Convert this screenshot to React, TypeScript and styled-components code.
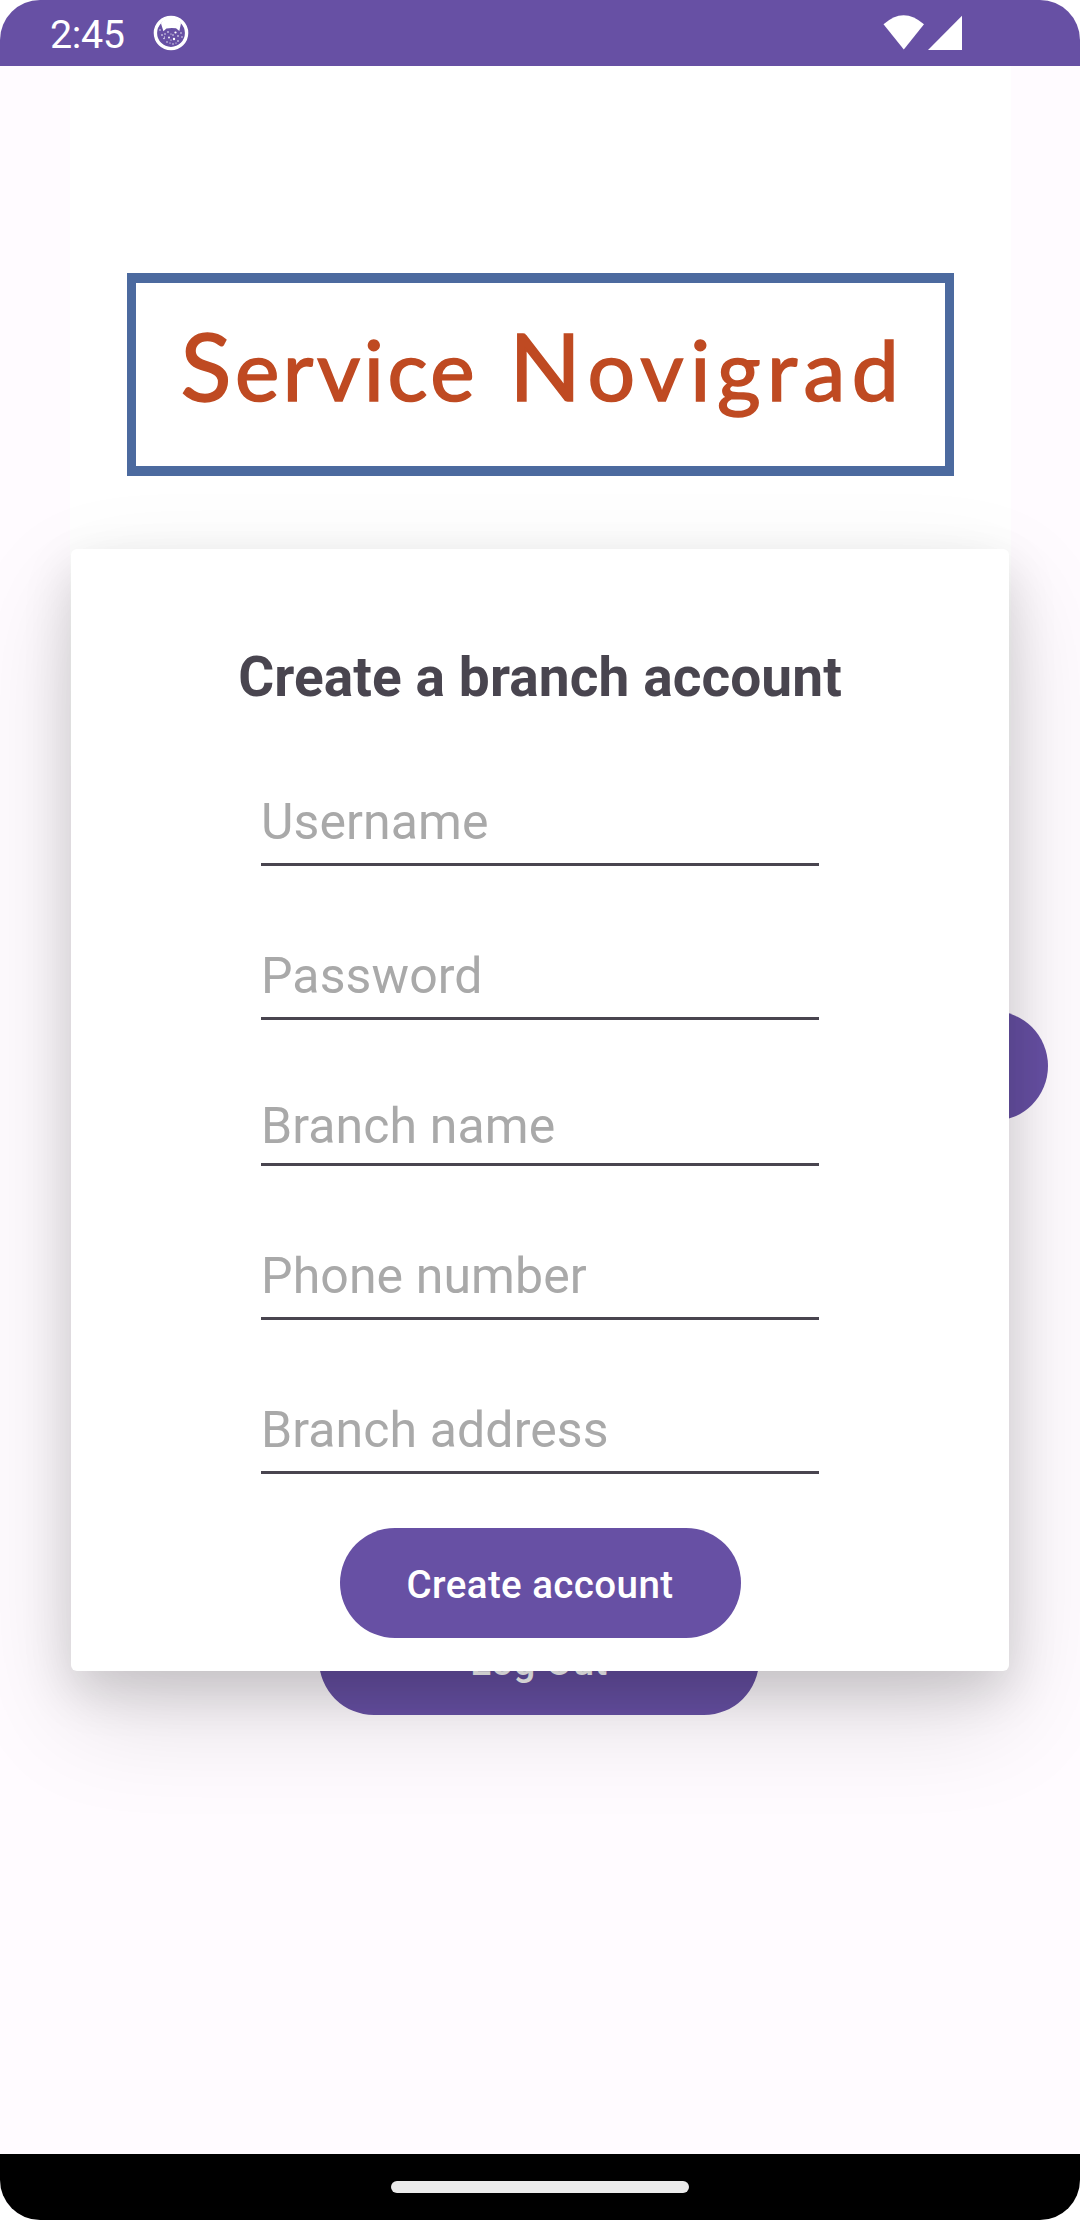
import React from "react";
import styled, { createGlobalStyle } from "styled-components";

const GlobalStyle = createGlobalStyle`
  *, *::before, *::after { box-sizing: border-box; }
  body { margin: 0; background: #ffffff; font-family: Roboto, "Liberation Sans", sans-serif; }
  button, input { font-family: inherit; }
`;

const PURPLE = "#6750a4";

const Screen = styled.div`
  position: relative;
  display: flex;
  flex-direction: column;
  width: 1080px;
  height: 2220px;
  overflow: hidden;
  border-radius: 40px;
  background: #fffbff;
`;

const StatusBar = styled.header`
  display: flex;
  align-items: center;
  height: 66px;
  flex: none;
  padding: 0 117px 0 50px;
  background: ${PURPLE};
  color: #ffffff;
`;

const Clock = styled.span`
  width: 78px;
  padding-top: 3px;
  font-size: 39.5px;
  line-height: 66px;
  letter-spacing: -0.4px;
  white-space: nowrap;
`;

const CatIcon = styled.svg`
  width: 36px;
  height: 36px;
  margin-left: 25px;
`;

const StatusIcons = styled.svg`
  width: 80px;
  height: 36px;
  margin-left: auto;
`;

const Page = styled.main`
  flex: 1;
  display: flex;
  flex-direction: column;
  align-items: center;
`;

const Banner = styled.div`
  width: 941px;
  height: 700px;
  flex: none;
  padding: 207px 57px 0;
  background: #ffffff;
`;

const Logo = styled.div`
  display: flex;
  align-items: baseline;
  gap: 31px;
  width: 827px;
  height: 203px;
  padding: 34px 0 0 45px;
  border: solid #4c6a9f;
  border-width: 10px 9px;
  color: #bf4a22;
  font-family: Lato, sans-serif;
  line-height: 96px;
`;

const LogoWord = styled.span<{ $spacing: number }>`
  display: inline-block;
  font-size: 84px;
  letter-spacing: ${(p) => p.$spacing}px;
  -webkit-text-stroke: 1.6px #bf4a22;
  &::first-letter { font-size: 94px; }
`;

const PillButton = styled.button<{ $width: number }>`
  display: flex;
  align-items: center;
  justify-content: center;
  width: ${(p) => p.$width}px;
  height: 110px;
  flex: none;
  padding: 2px 0 0;
  border: 0;
  border-radius: 55px;
  background: ${PURPLE};
  color: #ffffff;
  font-size: 38.5px;
  font-weight: 500;
  letter-spacing: 0.42px;
`;

const ActionRow = styled.div`
  display: flex;
  justify-content: flex-end;
  width: 100%;
  margin-top: 245px;
  padding-right: 32px;
`;

const LogoutRow = styled.div`
  display: flex;
  justify-content: center;
  width: 100%;
  margin-top: 484px;
  padding-right: 2px;
`;

const NavBar = styled.footer`
  display: flex;
  align-items: center;
  justify-content: center;
  height: 66px;
  flex: none;
  background: #000000;
`;

const NavHandle = styled.div`
  width: 298px;
  height: 12px;
  border-radius: 6px;
  background: #ebebeb;
`;

const Dialog = styled.section`
  position: absolute;
  top: 549px;
  left: 71px;
  display: flex;
  flex-direction: column;
  align-items: center;
  width: 938px;
  height: 1122px;
  border-radius: 6px;
  background: #ffffff;
  box-shadow: 0 20px 50px rgba(0, 0, 0, 0.14), 0 44px 110px rgba(0, 0, 0, 0.13);
`;

const Title = styled.h1`
  margin: 95px 0 0;
  color: #49454f;
  font-size: 55px;
  font-weight: 700;
  line-height: 66px;
  letter-spacing: 0.1px;
  white-space: nowrap;
`;

const Fields = styled.form`
  display: flex;
  flex-direction: column;
  gap: 66px;
  width: 558px;
  margin-top: 68px;
`;

const Field = styled.input<{ $height: number }>`
  width: 100%;
  height: ${(p) => p.$height}px;
  padding: 0;
  border: 0;
  outline: 0;
  border-radius: 0;
  background: linear-gradient(#49454f, #49454f) left bottom / 100% 3px no-repeat;
  color: #49454f;
  font-size: 50px;
  letter-spacing: 0.1px;
  &::placeholder { color: #a9a9a9; opacity: 1; }
`;

const fields = [
  { label: "Username", type: "text", height: 88 },
  { label: "Password", type: "password", height: 88 },
  { label: "Branch name", type: "text", height: 80 },
  { label: "Phone number", type: "tel", height: 88 },
  { label: "Branch address", type: "text", height: 88 },
];

const Submit = styled.div`
  display: flex;
  margin-top: 54px;
`;

const freckles: [number, number, number][] = [
  [7, 15, 0.7], [9, 20, 0.8], [12, 19, 0.7], [11, 23.5, 0.7], [15, 17, 0.8],
  [11.5, 22, 0.6], [16, 22.5, 0.9], [14, 27, 0.7], [18, 25, 0.6], [20, 29, 0.7],
  [22.5, 17.5, 1.1], [20, 20, 0.7], [21, 24, 1.2], [25, 21, 0.8], [25, 26, 0.8],
  [28, 18, 0.7], [29, 22, 0.7], [18, 19, 0.6], [17, 28, 0.6], [23, 28, 0.6],
];

export default function App() {
  return (
    <>
      <GlobalStyle />
      <Screen>
        <StatusBar>
          <Clock>2:45</Clock>
          <CatIcon viewBox="0 0 36 36" fill="#ffffff">
            <circle cx="18" cy="18" r="15.6" fill="none" stroke="#ffffff" strokeWidth="3.4" />
            <path d="M8 8.5 C12 1 24 1 28 8.5 L26.3 16 L23 13.2 Q18 12.6 13.4 13.4 L10.4 16.2 Z" />
            {freckles.map(([x, y, r]) => (
              <circle key={`${x}-${y}`} cx={x} cy={y} r={r} />
            ))}
          </CatIcon>
          <StatusIcons viewBox="0 0 80 36" fill="#ffffff">
            <path d="M0.5 9.3 Q20.5 -9 41 9.3 L20.8 34.5 Z" />
            <path d="M45 35 L79 0.8 V35 Z" />
          </StatusIcons>
        </StatusBar>
        <Page>
          <Banner>
            <Logo>
              <LogoWord $spacing={3.5}>Service</LogoWord>
              <LogoWord $spacing={6.5}>Novigrad</LogoWord>
            </Logo>
          </Banner>
          <ActionRow>
            <PillButton $width={440} />
          </ActionRow>
          <LogoutRow>
            <PillButton $width={440}>Log Out</PillButton>
          </LogoutRow>
        </Page>
        <NavBar>
          <NavHandle />
        </NavBar>
        <Dialog>
          <Title>Create a branch account</Title>
          <Fields>
            {fields.map((f) => (
              <Field key={f.label} type={f.type} placeholder={f.label} $height={f.height} />
            ))}
          </Fields>
          <Submit>
            <PillButton $width={401}>Create account</PillButton>
          </Submit>
        </Dialog>
      </Screen>
    </>
  );
}
